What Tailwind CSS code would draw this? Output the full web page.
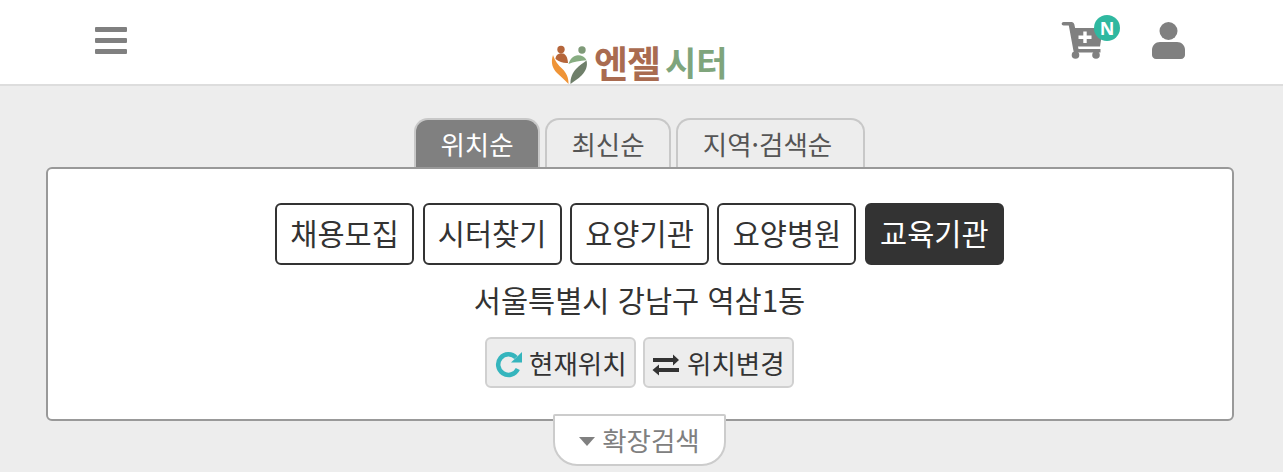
<!DOCTYPE html>
<html lang="ko">
  <head>
    <meta charset="UTF-8" />
    <meta name="viewport" content="width=device-width, initial-scale=1.0" />
    <script src="https://cdn.jsdelivr.net/npm/@tailwindcss/browser@4"></script>
    <title>엔젤시터</title>
  </head>
  <body class="font-['Noto_Sans_CJK_KR','Noto_Sans',sans-serif] bg-[#ededed] h-[472px] overflow-hidden text-[#333]">
    <!-- header -->
    <header class="relative h-[86px] bg-white border-b-2 border-[#ddd]">
      <div class="flex h-full items-start justify-between">
        <button class="ml-[95px] mt-[27px] flex flex-col gap-[6px] w-[32px]">
          <span class="block h-[5px] rounded-[1px] bg-[#808080]"></span>
          <span class="block h-[5px] rounded-[1px] bg-[#808080]"></span>
          <span class="block h-[5px] rounded-[1px] bg-[#808080]"></span>
        </button>
        <div class="mr-[98px] flex gap-[30px]">
          <div class="relative mt-[12px] w-[66px] h-[52px]">
            <svg width="66" height="52" viewBox="0 0 66 52">
              <path d="M7.500 10h8c1.500 0 2.500 1 2.800 2.300l.8 3.700H47l-3 18.500H22l.5 2.500h22v3.500H20c-1.300 0-2.300-.8-2.600-2.100L12.800 13.500H7.500c-1 0-1.800-.8-1.800-1.750S6.500 10 7.500 10z" fill="#808080" />
              <circle cx="19.500" cy="43" r="3.800" fill="#808080" />
              <circle cx="40" cy="43" r="3.800" fill="#808080" />
              <path d="M27.300 19.500h3.400v4h4.800v3.400h-4.800v4h-3.400v-4h-4.800v-3.400h4.800z" fill="#fff" />
            </svg>
            <span class="absolute left-[38px] top-[3px] w-[26px] h-[26px] rounded-full bg-[#2fb8a0] text-white text-[18px] font-bold leading-[26px] text-center font-['Noto_Sans',sans-serif]">N</span>
          </div>
          <svg class="mt-[22px]" width="33" height="37" viewBox="0 0 33 37">
            <circle cx="16.500" cy="9" r="9" fill="#808080" />
            <path d="M8 20h17c4.500 0 8 3.500 8 8v5c0 2.200-1.800 4-4 4H4c-2.200 0-4-1.800-4-4v-5c0-4.500 3.500-8 8-8z" fill="#808080" />
          </svg>
        </div>
      </div>
      <!-- logo -->
      <div class="absolute left-[548px] top-[40px] flex items-center">
        <svg width="44" height="44" viewBox="0 0 44 44">
          <circle cx="13" cy="7.500" r="3.700" fill="#b5653a" />
          <circle cx="34" cy="8" r="3.700" fill="#7f9a78" />
          <path d="M7.500 17c0-3.500 2.500-5.800 6-5.800 3.800 0 6 3.300 6.500 9.800-4 .5-8.500-.8-12.500-4z" fill="#b5653a" />
          <path d="M20.500 22c1.500-5 5-8.800 9.500-8.800 3.800 0 7 1.800 8.500 5-6.500.5-13 1.300-18 3.800z" fill="#88ad82" />
          <path d="M5 13c-2.500 7.500-.5 13.500 4 18 4 4 8 7 11.500 11 .3-6-2-11-6-15C10 23 7 19 5 13z" fill="#ef9437" />
          <path d="M38.500 18.500c1.500 6-1 11-5 15-3.500 3.500-7.500 5.500-11 8.500-.3-6 2-11.500 6-15.500 3-3 6.500-5.500 10-8z" fill="#6f7f6a" />
        </svg>
        <span class="ml-[2px] mb-[3px] text-[37px] leading-[44px] font-bold tracking-[-1px] text-[#a96b50]">엔젤</span>
        <span class="ml-[5px] mb-[3px] text-[34px] leading-[44px] font-semibold text-[#7fa57c]">시터</span>
      </div>
    </header>

    <!-- tabs -->
    <nav class="mt-[32px] h-[50px] flex gap-[5px] pl-[414px] text-[26.500px] leading-[47px]">
      <div class="w-[126px] h-[50px] text-center rounded-t-[14px] border-2 border-b-0 border-[#c8c8c8] bg-[#808080] text-white">위치순</div>
      <div class="w-[126px] h-[50px] text-center rounded-t-[14px] border-2 border-b-0 border-[#c8c8c8] text-[#555]">최신순</div>
      <div class="w-[189px] h-[50px] pr-[6px] text-center rounded-t-[14px] border-2 border-b-0 border-[#c8c8c8] text-[#555]">지역·검색순</div>
    </nav>

    <!-- search panel -->
    <section class="relative mx-[46px] mt-[-1px] w-[1188px] h-[254px] bg-white border-2 border-[#999] rounded-[6px] flex flex-col items-center">
      <div class="mt-[34px] mr-[1px] flex justify-center gap-[8.450px] text-[29.500px]">
        <button class="w-[139px] h-[62px] pb-[3px] rounded-[6px] border-2 border-[#333]">채용모집</button>
        <button class="w-[139px] h-[62px] pb-[3px] rounded-[6px] border-2 border-[#333]">시터찾기</button>
        <button class="w-[139px] h-[62px] pb-[3px] rounded-[6px] border-2 border-[#333]">요양기관</button>
        <button class="w-[139px] h-[62px] pb-[3px] rounded-[6px] border-2 border-[#333]">요양병원</button>
        <button class="w-[139px] h-[62px] pb-[3px] rounded-[6px] border-2 border-[#333] bg-[#333] text-white">교육기관</button>
      </div>
      <p class="mt-[12px] mr-[1px] text-[29.500px] leading-[44px]">서울특별시 강남구 역삼1동</p>
      <div class="mt-[16px] mr-[1px] flex justify-center gap-[7px] text-[26.500px]">
        <button class="w-[151px] h-[51px] flex items-center pl-[3px] rounded-[6px] border-2 border-[#d0d0d0] bg-[#ededed]">
          <svg class="mb-[2px]" width="40" height="36" viewBox="0 0 40 36">
            <path d="M26 13.500A10.300 10.300 0 1 0 27.800 25" fill="none" stroke="#35b5bd" stroke-width="4.500" />
            <path d="M21 18.500H32V8z" fill="#35b5bd" />
          </svg>
          <span class="ml-[-1px]">현재위치</span>
        </button>
        <button class="w-[151px] h-[51px] flex items-center pl-[3px] rounded-[6px] border-2 border-[#d0d0d0] bg-[#ededed]">
          <svg width="40" height="36" viewBox="0 0 40 36">
            <path d="M5 13h20V9.500l6 5.500-6 5.500V17H5z" fill="#333" />
            <path d="M31 23H11v-3.500L4.500 25l6.500 5.500V27h20z" fill="#333" />
          </svg>
          <span class="ml-[-1px]">위치변경</span>
        </button>
      </div>
      <!-- expand toggle hangs over the panel edge -->
      <button class="absolute left-[505px] top-[245px] w-[173px] h-[52px] flex items-center justify-center gap-[7px] bg-white border-2 border-[#ccc] rounded-t-[2px] rounded-b-[24px] text-[26.500px] text-[#808080]">
        <span class="w-0 h-0 mt-[3px] border-x-[8px] border-x-transparent border-t-[9px] border-t-[#808080]"></span>
        <span>확장검색</span>
      </button>
    </section>
  </body>
</html>
